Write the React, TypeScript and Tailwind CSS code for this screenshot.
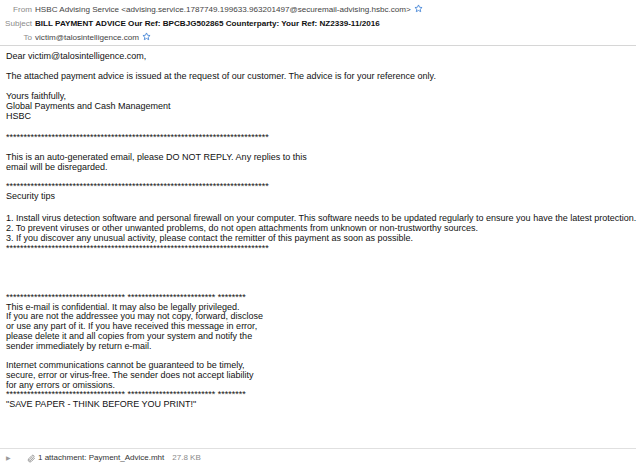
import React from 'react';

const STARS_LONG = '*'.repeat(75);
const STARS_FOOT = `${'*'.repeat(34)} ${'*'.repeat(25)} ${'*'.repeat(8)}`;

function StarIcon() {
  return (
    <svg width="9" height="9" viewBox="0 0 24 24" className="inline-block ml-[3px] -mt-[2px] align-middle">
      <path
        d="M12 2.5l2.9 6.2 6.6.7-5 4.5 1.4 6.6L12 17.2l-5.9 3.3 1.4-6.6-5-4.5 6.6-.7z"
        fill="none"
        stroke="#3b7fd4"
        strokeWidth="2.2"
        strokeLinejoin="round"
      />
    </svg>
  );
}

function HeaderRow({ label, children }: { label: string; children: React.ReactNode }) {
  return (
    <div className="flex items-baseline">
      <span className="w-[35px] shrink-0 text-right pr-[3px] text-[#8a8a8a]">{label}</span>
      <span className="whitespace-nowrap">{children}</span>
    </div>
  );
}

function Lines({ lines, className = '' }: { lines: string[]; className?: string }) {
  return (
    <div className={className}>
      {lines.map((l, i) => (
        <div key={i} className="whitespace-pre">{l}</div>
      ))}
    </div>
  );
}

export default function App() {
  return (
    <div
      className="w-[640px] h-[469px] bg-white overflow-hidden text-black"
      style={{ fontFamily: '"Liberation Sans", Arial, Helvetica, sans-serif' }}
    >
      {/* Message header */}
      <div className="pt-[3px] text-[8.1px] leading-[13.5px] space-y-[0.5px] h-[45px]">
        <HeaderRow label="From">
          <span className="text-[#444]">
            HSBC Advising Service &lt;advising.service.1787749.199633.963201497@securemail-advising.hsbc.com&gt;
          </span>
          <StarIcon />
        </HeaderRow>
        <HeaderRow label="Subject">
          <span className="font-bold text-[#111]">
            BILL PAYMENT ADVICE Our Ref: BPCBJG502865 Counterparty: Your Ref: NZ2339-11/2016
          </span>
        </HeaderRow>
        <HeaderRow label="To">
          <span className="text-[#444]">victim@talosintelligence.com</span>
          <StarIcon />
        </HeaderRow>
      </div>
      <div className="h-px bg-[#d6d6d6] mr-[4px]" />

      {/* Body */}
      <div className="px-[6px] pt-[6px] text-[9px] leading-[9.75px] text-[#111]">
        <Lines lines={['Dear victim@talosintelligence.com,']} />
        <Lines
          className="mt-[9.75px]"
          lines={['The attached payment advice is issued at the request of our customer. The advice is for your reference only.']}
        />
        <Lines
          className="mt-[11px]"
          lines={['Yours faithfully,', 'Global Payments and Cash Management', 'HSBC']}
        />
        <Lines className="mt-[11px]" lines={[STARS_LONG]} />
        <Lines
          className="mt-[11px]"
          lines={[
            'This is an auto-generated email, please DO NOT REPLY. Any replies to this',
            'email will be disregarded.',
          ]}
        />
        <Lines className="mt-[9px]" lines={[STARS_LONG, 'Security tips']} />
        <Lines
          className="mt-[13px]"
          lines={[
            '1. Install virus detection software and personal firewall on your computer. This software needs to be updated regularly to ensure you have the latest protection.',
            '2. To prevent viruses or other unwanted problems, do not open attachments from unknown or non-trustworthy sources.',
            '3. If you discover any unusual activity, please contact the remitter of this payment as soon as possible.',
          ]}
        />
        <div className="mt-[1px] leading-[7px] whitespace-pre">{STARS_LONG}</div>

        <div className="mt-[41px] leading-[9px] whitespace-pre">{STARS_FOOT}</div>
        <Lines
          className="mt-[1px]"
          lines={[
            'This e-mail is confidential. It may also be legally privileged.',
            'If you are not the addressee you may not copy, forward, disclose',
            'or use any part of it. If you have received this message in error,',
            'please delete it and all copies from your system and notify the',
            'sender immediately by return e-mail.',
          ]}
        />
        <Lines
          className="mt-[10px]"
          lines={[
            'Internet communications cannot be guaranteed to be timely,',
            'secure, error or virus-free. The sender does not accept liability',
            'for any errors or omissions.',
          ]}
        />
        <div className="leading-[7px] whitespace-pre">{STARS_FOOT}</div>
        <Lines className="mt-[2px]" lines={['"SAVE PAPER - THINK BEFORE YOU PRINT!"']} />
      </div>

      {/* Attachments */}
      <div className="mt-[39px] h-px bg-[#e0e0e0] mr-[4px]" />
      <div className="flex items-center h-[18px] text-[8px] text-[#333]">
        <span className="ml-[6px] text-[6px] text-[#9a9a9a]">▶</span>
        <svg width="9" height="9" viewBox="0 0 24 24" className="ml-[16px] mr-[2px]">
          <path
            d="M20 11.5l-8.2 8.2a5 5 0 0 1-7.1-7.1l8.5-8.5a3.4 3.4 0 0 1 4.8 4.8l-8.5 8.5a1.7 1.7 0 0 1-2.4-2.4l7.8-7.8"
            fill="none"
            stroke="#8c8c8c"
            strokeWidth="2.2"
            strokeLinecap="round"
          />
        </svg>
        <span>1 attachment: Payment_Advice.mht</span>
        <span className="ml-[8px] text-[#8a8a8a]">27.8 KB</span>
      </div>
    </div>
  );
}
